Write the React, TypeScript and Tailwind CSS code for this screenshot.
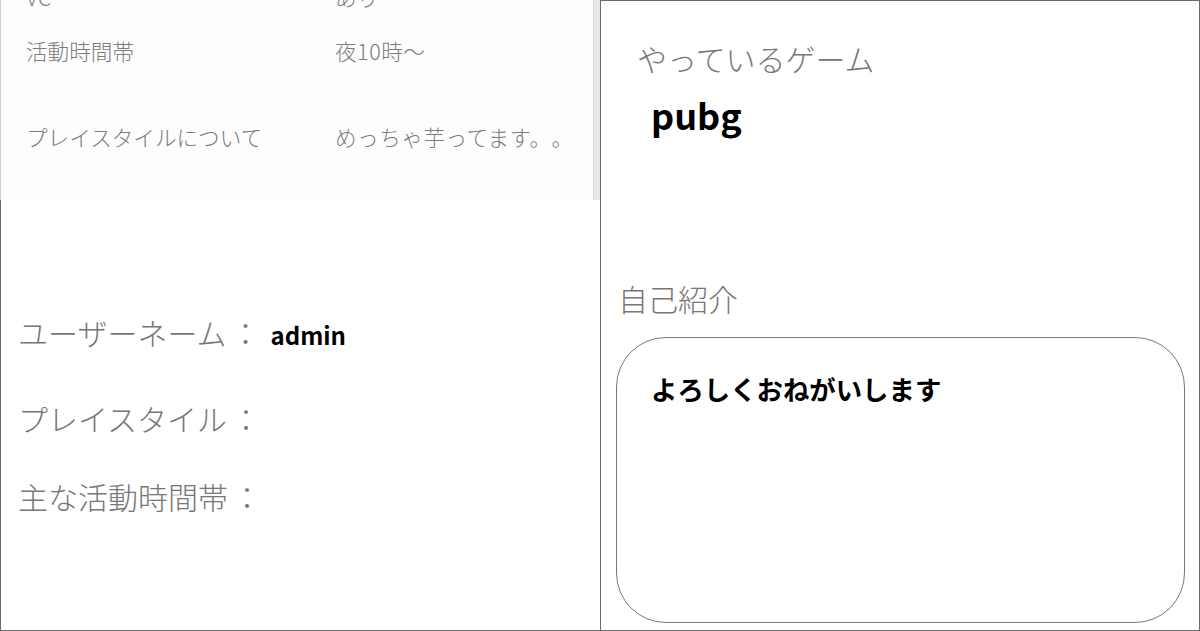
const jp = "font-['Noto_Sans_CJK_JP','Noto_Sans',sans-serif] [text-spacing-trim:space-all]";

const snapshotRows = [
  { label: "VC", value: "あり", top: "-mt-[18px]" },
  { label: "活動時間帯", value: "夜10時〜", top: "mt-[24px]" },
  { label: "プレイスタイルについて", value: "めっちゃ芋ってます。。", top: "mt-[56px]" },
];

const profileRows = [
  { label: "ユーザーネーム", value: "admin", top: "mt-[112px]" },
  { label: "プレイスタイル", value: "", top: "mt-[43px]" },
  { label: "主な活動時間帯", value: "", top: "mt-[38px]" },
];

export default function App() {
  return (
    <div className={`${jp} w-[1200px] h-[631px] grid grid-cols-2 bg-white overflow-hidden`}>
      {/* left: profile */}
      <div className="flex flex-col h-[631px]">
        <div className="relative h-[200px] shrink-0 overflow-hidden bg-[#fdfdfd] border-l border-[#d4d4d4]">
          {snapshotRows.map((r) => (
            <div
              key={r.label}
              className={`${r.top} grid grid-cols-[309px_1fr] pl-[25px] text-[21.6px] leading-[30px] font-light text-[#7c7c7c]`}
            >
              <span>{r.label}</span>
              <span className="tracking-[0.5px]">{r.value}</span>
            </div>
          ))}
          <div className="absolute right-0 top-0 h-full w-[7px] bg-[#e8e8e8] border-l border-[#d8d8d8]" />
        </div>
        <div className="flex-1 border-l border-b border-[#6b6b6b]">
          {profileRows.map((r) => (
            <div key={r.label} className={`${r.top} flex items-baseline pl-[17px] leading-[40px]`}>
              <span className="text-[30px] font-light text-[#777]">
                {r.label}
                <span className="ml-[4px]">：</span>
              </span>
              {r.value && (
                <span className="ml-[10px] text-[24px] font-bold text-black">{r.value}</span>
              )}
            </div>
          ))}
        </div>
      </div>

      {/* right: games + intro */}
      <div className="h-[631px] border border-[#6b6b6b] flex flex-col">
        <div className="mt-[37px] pl-[36px] text-[30px] leading-[40px] font-light text-[#777]">
          やっているゲーム
        </div>
        <div className="mt-[14px] pl-[50px] text-[36px] leading-[44px] font-bold text-black">pubg</div>
        <div className="mt-[142px] pl-[17px] text-[30px] leading-[40px] font-light text-[#777]">
          自己紹介
        </div>
        <div className="mt-[19px] ml-[15px] w-[569px] h-[286px] rounded-[50px] border border-[#777] pl-[34px] pt-[33px]">
          <p className="text-[26.4px] leading-[36px] font-bold text-black">よろしくおねがいします</p>
        </div>
      </div>
    </div>
  );
}
